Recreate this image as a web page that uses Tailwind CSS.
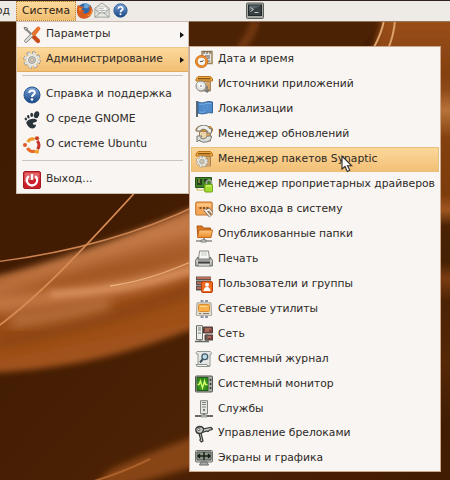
<!DOCTYPE html>
<html lang="ru">
<head>
<meta charset="utf-8">
<title>Система</title>
<script src="https://cdn.jsdelivr.net/npm/@tailwindcss/browser@4"></script>
</head>
<body class="relative h-[480px] w-[450px] overflow-hidden bg-[#482003] font-['DejaVu_Sans',sans-serif] text-[10.75px] text-[#2d2926]">

<!-- Wallpaper -->
<svg class="absolute inset-0" width="450" height="480" viewBox="0 0 450 480">
  <defs>
    <linearGradient id="bg" x2="1" y2="1"><stop stop-color="#3e1b02"/><stop offset=".35" stop-color="#421c02"/><stop offset=".65" stop-color="#4c2205"/><stop offset="1" stop-color="#421c02"/></linearGradient>
    <linearGradient id="band" x1="0" y1="0" x2=".25" y2="1"><stop stop-color="#a0531f"/><stop offset=".35" stop-color="#bd7341"/><stop offset=".6" stop-color="#974b16"/><stop offset="1" stop-color="#a3531b"/></linearGradient>
    <linearGradient id="right" x1="0" y1="22" x2="0" y2="422" gradientUnits="userSpaceOnUse"><stop stop-color="#9a4f18"/><stop offset=".13" stop-color="#84400f"/><stop offset=".17" stop-color="#8f4a19"/><stop offset=".22" stop-color="#b8733a"/><stop offset=".29" stop-color="#84400f"/><stop offset=".43" stop-color="#7d3c0c"/><stop offset=".47" stop-color="#a05520"/><stop offset=".51" stop-color="#4a2204"/><stop offset=".6" stop-color="#452003"/><stop offset=".64" stop-color="#7a3c12"/><stop offset=".7" stop-color="#4a2204"/><stop offset=".85" stop-color="#552807"/><stop offset="1" stop-color="#421c02"/></linearGradient>
    <filter id="b1" x="-20%" y="-20%" width="140%" height="140%"><feGaussianBlur stdDeviation=".6"/></filter>
    <filter id="b3" x="-20%" y="-30%" width="140%" height="160%"><feGaussianBlur stdDeviation="3"/></filter>
    <filter id="b7" x="-20%" y="-50%" width="140%" height="200%"><feGaussianBlur stdDeviation="6"/></filter>
  </defs>
  <rect width="450" height="480" fill="url(#bg)"/>
  <path d="M189 22H380L360 48H189Z" fill="#4c2204"/>
  <path d="M385 10H470V440H436V60H370Z" fill="url(#right)" filter="url(#b3)"/>
  <path d="M440 60H451V440H440Z" fill="url(#right)"/>
  <path d="M-20 280C60 263 130 236 210 200V322C130 355 60 371-20 373Z" fill="url(#band)" filter="url(#b3)"/>
  <path d="M-10 292C50 270 110 247 200 222" fill="none" stroke="#cc8350" stroke-width="12" opacity=".6" filter="url(#b7)"/>
  <path d="M-10 306C60 296 130 290 200 266" fill="none" stroke="#d58b58" stroke-width="16" opacity=".75" filter="url(#b7)"/>
  <path d="M10 322C50 318 80 312 110 304" fill="none" stroke="#c27f4d" stroke-width="14" opacity=".7" filter="url(#b7)"/>
  <path d="M50 294C110 292 160 281 205 265" fill="none" stroke="#e6a16e" stroke-width="5" opacity=".8" filter="url(#b3)"/>
  <path d="M110 286C145 281 170 271 205 256" fill="none" stroke="#f1bc8b" stroke-width="1.3" opacity=".8" filter="url(#b1)"/>
  <path d="M-5 343C70 330 130 314 205 283" fill="none" stroke="#7c3a0e" stroke-width="11" opacity=".55" filter="url(#b7)"/>
  <path d="M-5 262C60 254 130 238 200 204" fill="none" stroke="#cc8250" stroke-width="1.4" filter="url(#b1)"/>
  <path d="M-3 327C45 292 95 236 140 187" fill="none" stroke="#d88c53" stroke-width="1.8" filter="url(#b1)"/>
  <path d="M110 470C140 456 165 448 205 432V464C165 474 130 488 90 490Z" fill="#874413" filter="url(#b3)"/>
  <path d="M88 483C115 475 130 469 150 459" fill="none" stroke="#a9602a" stroke-width="2" filter="url(#b1)"/>
  <path d="M256 20Q252 34 240 49" fill="none" stroke="#7b3c12" stroke-width="7" filter="url(#b3)"/>
  <path d="M384 20Q382 33 373 49M395 20Q394 35 388 49" fill="none" stroke="#dda16a" stroke-width="2" filter="url(#b1)"/>
</svg>

<!-- Icon library -->
<svg class="absolute size-0" aria-hidden="true">
  <defs>
    <linearGradient id="gBlue" x2="0" y2="1"><stop stop-color="#7ba5d7"/><stop offset="1" stop-color="#174584"/></linearGradient>
    <linearGradient id="gOr" x2="0" y2="1"><stop stop-color="#ffc77c"/><stop offset="1" stop-color="#e98b2c"/></linearGradient>
    <linearGradient id="gGrey" x2="0" y2="1"><stop stop-color="#fafaf8"/><stop offset="1" stop-color="#a9aba6"/></linearGradient>
    <g id="box"><path d="M3 1.500h12.500l2 2.500v2H1V4z" fill="#f0a83f" stroke="#b8741f"/><path d="M3 3.700h12.500" stroke="#7b5014" stroke-width="1.300"/><path d="M4.500 6.500h11v9.500h-11z" fill="#ecd3ab" stroke="#a68258"/><path d="M11 7h4v8h-4z" fill="#d3a566"/></g>
    <symbol id="help" viewBox="0 0 18 18"><circle cx="9" cy="9" r="8" fill="url(#gBlue)" stroke="#28558f"/><path d="M6.300 7C6.200 3.700 12 3.700 11.800 7C11.700 8.700 9 8.700 9 11" fill="none" stroke="#fff" stroke-width="2"/><circle cx="9" cy="13.500" r="1.300" fill="#fff"/></symbol>
    <symbol id="tools" viewBox="0 0 18 18"><path d="M2 2l8 8" stroke="#85857e" stroke-width="2"/><path d="M10.500 10.500l4.500 4.500" stroke="#c74b1b" stroke-width="4.200" stroke-linecap="round"/><path d="M3 15L13 5" stroke="#777a75" stroke-width="3.500" stroke-linecap="round"/><path d="M3 15L13 5" stroke="#e3e4df" stroke-width="2" stroke-linecap="round"/><path d="M15.300 2.500L11 8" stroke="#e7742a" stroke-width="4" stroke-linecap="round"/><path d="M1 1.200l3.500 1-2 2.200z" fill="#eee" stroke="#777"/></symbol>
    <symbol id="gear" viewBox="0 0 18 18"><circle cx="9" cy="9" r="7" fill="none" stroke="#918f86" stroke-width="3.400" stroke-dasharray="3.500 2"/><circle cx="9" cy="9" r="6.900" fill="none" stroke="#e8e7e2" stroke-width="2.200" stroke-dasharray="2.900 2.600" stroke-dashoffset="-.3"/><circle cx="9" cy="9" r="6" fill="#e8e7e2"/><circle cx="9" cy="9" r="3.400" fill="#d3d1ca" stroke="#9b9990"/><circle cx="9" cy="9" r="1.500" fill="#f5e2bd" stroke="#8f8d84" stroke-width=".7"/></symbol>
    <symbol id="gnome" viewBox="0 0 18 18"><g fill="#29353b"><ellipse cx="13.500" cy="3.700" rx="2.600" ry="3.500" transform="rotate(18 13.500 3.700)"/><ellipse cx="8.700" cy="3.900" rx="1.400" ry="2.100"/><ellipse cx="5.300" cy="5.700" rx="1.200" ry="1.800" transform="rotate(-15 5.300 5.700)"/><ellipse cx="2.800" cy="8" rx="1.100" ry="1.500" transform="rotate(-25 2.800 8)"/><path d="M3.500 11C6 7 13.500 7 14 9.500C14 12 9 11 10 13C12 15 12.500 12.500 13 14C12.500 18.500 7 18.500 5 15C4 13 3 12.500 3.500 11"/></g></symbol>
    <symbol id="ubuntu" viewBox="0 0 18 18"><g fill="none" stroke-width="3.200"><path d="M4.700 6A6 6 0 0 1 11.500 3.300" stroke="#ef9b2c"/><path d="M14.300 5A6 6 0 0 1 14.500 13" stroke="#c9332d"/><path d="M12 15A6 6 0 0 1 4.500 12" stroke="#e76a27"/></g><circle cx="2" cy="9" r="2" fill="#df5829"/><circle cx="14" cy="2.300" r="2.100" fill="#cc4324"/><circle cx="14" cy="15.700" r="2.100" fill="#efa12d"/></symbol>
    <symbol id="power" viewBox="0 0 18 18"><rect x=".5" y=".5" width="17" height="17" rx="1.500" fill="#cb2029" stroke="#a51820"/><path d="M1.500 1.500h15v6q-8 0-15 4z" fill="#e26468"/><path d="M5.800 5.200A5.200 5.200 0 1 0 12.200 5.200M9 3v6" stroke="#fff" stroke-width="2.300" fill="none"/></symbol>
    <symbol id="clock" viewBox="0 0 18 18"><path d="M7 1.500h10v12H7z" fill="#e9e6df" stroke="#9f8156" stroke-width="1.500"/><path d="M9 1v3M12 1v3M15 1v3M10 6h5M12 8h3M12 11h3" stroke="#55534f"/><circle cx="6.500" cy="11.500" r="5.200" fill="#f6f4ef" stroke="#b95e13" stroke-width="2.600"/><circle cx="6.500" cy="11.500" r="5.200" fill="none" stroke="#f28e2b" stroke-width="1.600"/><path d="M5 11.500h2.500l1-1.500" stroke="#555" fill="none"/></symbol>
    <symbol id="sources" viewBox="0 0 18 18"><use href="#box"/><circle cx="6" cy="11" r="5" fill="#e5e6e3" stroke="#858783"/><path d="M6 11l-4-2 2-2z" fill="#fff"/><circle cx="6" cy="11" r="1.600" fill="#a9aaa7" stroke="#fff"/><path d="M12 11v6M9.500 14.500L12 17l2.500-2.500" fill="none" stroke="#777" stroke-width="1.500"/></symbol>
    <symbol id="flag" viewBox="0 0 18 18"><path d="M2 1v16" stroke="#4c5962" stroke-width="1.800"/><path d="M3 2q4 2 8 0 3-1 6.500 0v11q-4-1-7 .5-4 1-7.500-.5z" fill="#4f8aca" stroke="#31649c"/><path d="M4 4q4 1 7-.5l5.500 0M4 12q4 1 6-.5" fill="none" stroke="#7aabdc"/><circle cx="10.500" cy="7.500" r="2.400" fill="none" stroke="#76a6d7" stroke-dasharray="1 1"/></symbol>
    <symbol id="update" viewBox="0 0 18 18"><use href="#box"/><path d="M1.500 6A7 6 0 0 1 15 4l1.500-1v5h-5l1.500-1.500Q8 2 5 6z" fill="#eeefeb" stroke="#7b7d78"/><path d="M16.500 11A7 6 0 0 1 4 15l-2 2v-6h5l-1.500 2q4 2.500 7-2z" fill="#ddded9" stroke="#777a75"/></symbol>
    <symbol id="synaptic" viewBox="0 0 18 18"><use href="#box"/><g transform="translate(.7 5.300) scale(.7)"><use href="#gear" width="18" height="18"/></g></symbol>
    <symbol id="driver" viewBox="0 0 18 18"><path d="M.5 2.500h16v10H.5z" fill="#438125" stroke="#28511a"/><path d="M2 4h5v6H2zM9 4h4v3H9z" fill="#25411d"/><path d="M3 5h2M3 7h2M2 13v2h7v-2" stroke="#c4c052" fill="none"/><path d="M11.500 10V6.500q2.500-3 5 0V10" fill="none" stroke="#a5a7a1" stroke-width="1.600"/><rect x="9.700" y="9.500" width="8" height="7.500" rx="1" fill="#a2dc2f" stroke="#6e9f18"/><path d="M11 11h5" stroke="#e2fb9b"/></symbol>
    <symbol id="login" viewBox="0 0 18 18"><rect x=".7" y="2" width="16.500" height="13" rx="1" fill="#f6a657" stroke="#bf7430"/><path d="M2 3.500h14v3H2z" fill="#ffc581"/><path d="M4.500 8h2M8 8h2M11.500 8h2" stroke="#593a20" stroke-width="1.500"/><path d="M9.500 9.500l6 7M11 11l3-1.500 3 3.500" fill="none" stroke="#6f6559" stroke-width="3"/><path d="M9.500 9.500l6 7M11 11l3-1.500 3 3.500" fill="none" stroke="#f7eee2" stroke-width="1.600"/></symbol>
    <symbol id="folder" viewBox="0 0 18 18"><path d="M2 1h5l1.500 2h7v9H3z" fill="#d97620" stroke="#ae5815"/><path d="M2.500 12.500L4 5h13.500L16 12.500z" fill="url(#gOr)" stroke="#c36a22"/><path d="M1 16h16M9 13v3" stroke="#8b8d88" stroke-width="1.700"/><path d="M6 15h5v2H6z" fill="#e9e9e5" stroke="#777"/></symbol>
    <symbol id="print" viewBox="0 0 18 18"><path d="M4.500 1h9l1 8h-11z" fill="#f8f8f6" stroke="#858783"/><path d="M6 3h6M6 5h6" stroke="#c9c9c5"/><path d="M3 7L.7 10v6h16.600v-6L15 7v3H3z" fill="url(#gGrey)" stroke="#646762"/><path d="M3 12.500h12" stroke="#3f423f" stroke-width="2"/><path d="M4 15h10" stroke="#eee"/></symbol>
    <symbol id="users" viewBox="0 0 18 18"><path d="M1 1.500h15v14H1z" fill="#5d5552"/><path d="M2 3h14M2 8h6M2 13h6" stroke="#b96c56" stroke-width="2"/><path d="M1 5.500h15M1 10.500h6" stroke="#9e9e9b"/><rect x="6.500" y="6.500" width="11" height="11" rx="1.500" fill="#ef6b20" stroke="#bd410d"/><circle cx="12" cy="9.700" r="2" fill="#fff"/><path d="M8.500 16q.5-4 3.500-4t3.500 4z" fill="#fff"/></symbol>
    <symbol id="nettools" viewBox="0 0 18 18"><path d="M5.500 1h3M10 1h3M5.500 17h3M10 17h3" stroke="#6c7690" stroke-width="1.500"/><path d="M2 2.800h14l.7 12.500H1.300z" fill="#e3ded2" stroke="#aaa499"/><rect x="3.500" y="4.500" width="11" height="7" rx="1" fill="#fab04b" stroke="#d88c31"/><path d="M5 6.500h7" stroke="#ffda98"/><path d="M4 13.500h2M8 13.500h6" stroke="#8b7d68"/></symbol>
    <symbol id="network" viewBox="0 0 18 18"><path d="M8.500 2h9v6h-9zM10 10h8v5h-8z" fill="#7d423a" stroke="#50403d"/><path d="M10 4h6M10 6h4M12 12h4" stroke="#cf8d77"/><path d="M1.500.7h6v14h-6z" fill="#eceeea" stroke="#656963"/><path d="M3 3h3M3 5h3M3 8h3" stroke="#767a74"/><path d="M0 16.500h14M12 9v7M5 15v2" stroke="#636762" stroke-width="1.400"/></symbol>
    <symbol id="log" viewBox="0 0 18 18"><path d="M2 1.500h13q2.500 1 1 3H15V16H3V4H1.500q-1-2 .5-2.500" fill="#e5e8e5" stroke="#949a95"/><path d="M1 14.500h11q0 2 3 2H3q-2 0-2-2" fill="#f5f6f4" stroke="#8c928c"/><path d="M8.300 8.500L5 12.500" stroke="#374d59" stroke-width="2"/><circle cx="9.800" cy="6.800" r="2.900" fill="#bfdae7" stroke="#435c6b" stroke-width="1.300"/></symbol>
    <symbol id="monitor" viewBox="0 0 18 18"><rect x=".5" y="1" width="17" height="16" rx="1" fill="#a8aaa5" stroke="#555852"/><path d="M2 2.500h11v13H2z" fill="#318b1c" stroke="#235d15"/><path d="M2 7h11M2 11h11M5.500 3v12M9.500 3v12" stroke="#45a52b" stroke-width=".6"/><path d="M2.500 9.500H4L5.500 6l2 7 2-7 1 3.500h2" fill="none" stroke="#d3ff69" stroke-width="1.400"/><path d="M15.500 4v2M15.500 8v2M15.500 12v2" stroke="#343632" stroke-width="1.500"/></symbol>
    <symbol id="server" viewBox="0 0 18 18"><path d="M5.500.7h7v13h-7z" fill="#e5e7e3" stroke="#80847e"/><path d="M7 2.500h4M7 4.500h4M7 7h4" stroke="#838680"/><path d="M8 10h2" stroke="#52544f" stroke-width="1.500"/><path d="M0 16h18M9 13.500v3" stroke="#676c66" stroke-width="1.800"/><path d="M6 15h6v2H6z" fill="#c9ccc7" stroke="#656863" stroke-width=".6"/></symbol>
    <symbol id="keys" viewBox="0 0 18 18"><path d="M7.500 4L16 2.500l1.500 1.500-1.500 1-1.500 0L13 6.500 11.500 6 7.500 7.500M6 8l2 8-1.700 1-1.500-2 .8-1L4 8.500" fill="#d0d1cd" stroke="#363836" stroke-width="1.200"/><path d="M1 6Q0 2 4.500 1.500Q8.500 1.500 8.500 4.500Q8 8.500 4.500 8.500Q1.500 8.500 1 6Z" fill="#c9cbc6" stroke="#343634" stroke-width="1.300"/><circle cx="3.800" cy="4.500" r="1.200" fill="#fff" stroke="#555"/></symbol>
    <symbol id="display" viewBox="0 0 18 18"><rect x=".5" y="1.500" width="17" height="11.500" rx="1" fill="#cfd1cd" stroke="#6b6e69"/><path d="M2 3h14v8H2z" fill="#8d9989" stroke="#4b504a"/><path d="M3 7h12M5 5L3 7l2 2M13 5l2 2-2 2M9 3v8" fill="none" stroke="#171a17" stroke-width="1.400"/><path d="M6 13h6l1.500 3h-9z" fill="#a7aaa6" stroke="#676b65"/></symbol>
    <symbol id="firefox" viewBox="0 0 18 18"><circle cx="9.500" cy="9" r="7.800" fill="#2e67ac"/><path d="M9 2q4-1 6 2l-3 3-4-1z" fill="#6aa5d9"/><path d="M2 3l2 1.500L8 5l-2 3 3 1.500-2 2q5 2 7-2 1-3-1-6 6 3 4 8.500-3 6-9 5.700Q2 17 1 11 .5 6 2 3" fill="#d65b1d"/><path d="M16 6q2 7-5 9 5 0 6-5z" fill="#ffc341"/><path d="M3 6l3 1-2 3z" fill="#f69a33"/></symbol>
    <symbol id="mail" viewBox="0 0 18 18"><path d="M1 7l8-6 8 6v10H1z" fill="#e9e9e4" stroke="#969992"/><path d="M3.500 5.500h11v7h-11z" fill="#fff" stroke="#babbb5"/><path d="M5 7.500h6M5 9.500h8" stroke="#aaa"/><path d="M1 8l6 4.500L1 17M17 8l-6 4.500 6 4.500M7 12l2-1 2 1" fill="none" stroke="#989c95"/></symbol>
    <symbol id="term" viewBox="0 0 18 18"><rect x=".5" y="1" width="17" height="15.500" rx="1" fill="#a4a7a2" stroke="#5c5f5c"/><rect x="2.500" y="3" width="13" height="10.500" fill="#394144" stroke="#23292a"/><path d="M3 3.500h12L3 9z" fill="#59666b"/><path d="M4.500 5.500l3 2-3 2M8.500 10.500h4" fill="none" stroke="#c5cbc8"/></symbol>
  </defs>
</svg>

<div class="relative flex h-[22px] w-full items-stretch border-t border-b border-t-[#30211f] border-b-[#91745b] bg-[#eeebe6]">
  <div class="flex w-4 items-center justify-end pr-[6px] whitespace-nowrap">од</div>
  <div class="flex w-[60px] items-center border border-dotted border-[#b98648] bg-linear-to-b from-[#fbd99c] to-[#f2bd70] pl-[5px] text-[#302313]">Система</div>
  <svg class="mt-px size-[17px]"><use href="#firefox"/></svg>
  <svg class="mt-px ml-px size-[16px]"><use href="#mail"/></svg>
  <svg class="mt-[2px] ml-[3px] size-[15px]"><use href="#help"/></svg>
  <svg class="mt-px ml-[118px] size-[18px]"><use href="#term"/></svg>
</div>

<nav class="absolute top-[21px] left-[16px] flex h-[173px] w-[173px] flex-col border border-[#cbbcae] bg-[#f8f5f2]">
  <div class="flex h-[25px] items-center gap-[5px] pl-[6px] pr-[4px]"><svg class="size-[18px]"><use href="#tools"/></svg><span class="grow">Параметры</span><svg width="4" height="6"><path d="M0 0l4 3-4 3z" fill="#111"/></svg></div>
  <div class="flex h-[25px] items-center gap-[5px] border-t border-b border-t-[#ecc88e] border-b-[#dfac65] bg-linear-to-b from-[#fcd89b] to-[#f2bf74] pl-[6px] pr-[4px]"><svg class="size-[18px]"><use href="#gear"/></svg><span class="grow">Администрирование</span><svg width="4" height="6"><path d="M0 0l4 3-4 3z" fill="#111"/></svg></div>
  <hr class="mx-[5px] mt-[3px] mb-[6px] h-px border-0 bg-[#ccc6be]">
  <div class="flex h-[25px] items-center gap-[5px] pl-[6px]"><svg class="size-[18px]"><use href="#help"/></svg><span>Справка и поддержка</span></div>
  <div class="flex h-[25px] items-center gap-[5px] pl-[6px]"><svg class="size-[18px]"><use href="#gnome"/></svg><span>О среде GNOME</span></div>
  <div class="flex h-[25px] items-center gap-[5px] pl-[6px]"><svg class="size-[18px]"><use href="#ubuntu"/></svg><span>О системе Ubuntu</span></div>
  <hr class="mx-[5px] mt-[3px] mb-[6px] h-px border-0 bg-[#ccc6be]">
  <div class="flex h-[25px] items-center gap-[5px] pl-[6px]"><svg class="size-[18px]"><use href="#power"/></svg><span>Выход...</span></div>
</nav>

<nav class="absolute top-[46px] left-[189px] flex h-[426px] w-[252px] flex-col border border-[#cba88e] bg-[#f8f5f2] px-px whitespace-nowrap *:flex *:flex-1 *:items-center *:gap-[5px] *:pl-[4px] [&_svg]:shrink-0">
  <div><svg class="size-[18px]"><use href="#clock"/></svg><span>Дата и время</span></div>
  <div><svg class="size-[18px]"><use href="#sources"/></svg><span>Источники приложений</span></div>
  <div><svg class="size-[18px]"><use href="#flag"/></svg><span>Локализации</span></div>
  <div><svg class="size-[18px]"><use href="#update"/></svg><span>Менеджер обновлений</span></div>
  <div class="bg-linear-to-b from-[#fcd89b] to-[#f2bf74] inset-ring inset-ring-[#e9bf7c]"><svg class="size-[18px]"><use href="#synaptic"/></svg><span>Менеджер пакетов Synaptic</span></div>
  <div><svg class="size-[18px]"><use href="#driver"/></svg><span>Менеджер проприетарных драйверов</span></div>
  <div><svg class="size-[18px]"><use href="#login"/></svg><span>Окно входа в систему</span></div>
  <div><svg class="size-[18px]"><use href="#folder"/></svg><span>Опубликованные папки</span></div>
  <div><svg class="size-[18px]"><use href="#print"/></svg><span>Печать</span></div>
  <div><svg class="size-[18px]"><use href="#users"/></svg><span>Пользователи и группы</span></div>
  <div><svg class="size-[18px]"><use href="#nettools"/></svg><span>Сетевые утилиты</span></div>
  <div><svg class="size-[18px]"><use href="#network"/></svg><span>Сеть</span></div>
  <div><svg class="size-[18px]"><use href="#log"/></svg><span>Системный журнал</span></div>
  <div><svg class="size-[18px]"><use href="#monitor"/></svg><span>Системный монитор</span></div>
  <div><svg class="size-[18px]"><use href="#server"/></svg><span>Службы</span></div>
  <div><svg class="size-[18px]"><use href="#keys"/></svg><span>Управление брелоками</span></div>
  <div><svg class="size-[18px]"><use href="#display"/></svg><span>Экраны и графика</span></div>
</nav>

<svg class="absolute top-[155px] left-[341px]" width="12" height="18" viewBox="0 0 12 18"><path d="M1 1v13l3-2.500 2.300 5 2.500-1.200-2.300-4.500h4.200z" fill="#fff" stroke="#2e2d2c" stroke-width="1.100"/></svg>
</body>
</html>
